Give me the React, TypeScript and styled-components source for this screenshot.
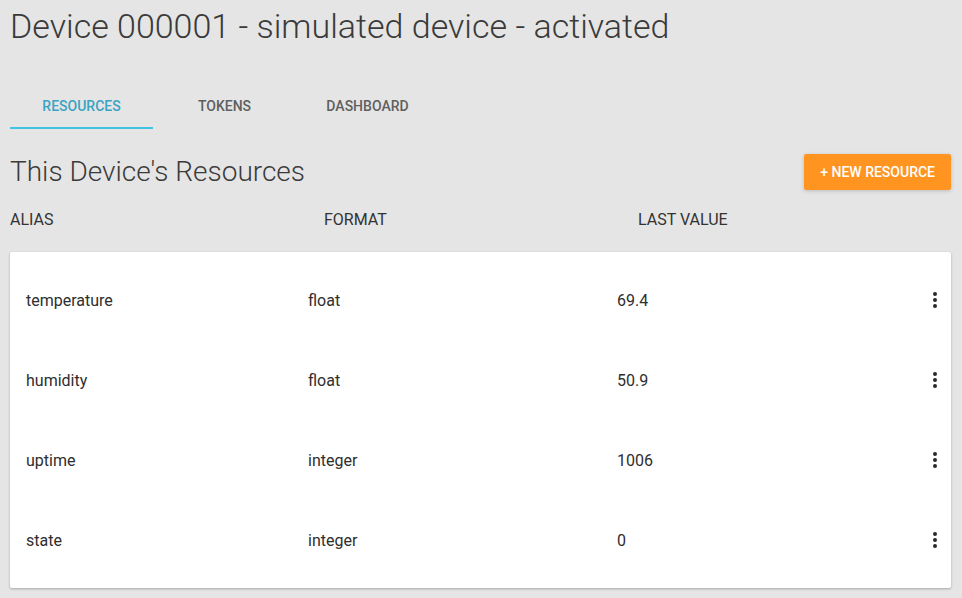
import React from "react";
import styled, { createGlobalStyle } from "styled-components";

const Global = createGlobalStyle`
  html, body { margin: 0; padding: 0; background: #e5e5e5; }
  body { font-family: Roboto, "Noto Sans", "Liberation Sans", sans-serif; color: #333; }
  * { box-sizing: border-box; }
`;

const Page = styled.div`
  padding: 6px 11px 10px 10px;
  display: flex;
  flex-direction: column;
`;

const Title = styled.h1`
  margin: 0;
  font-size: 34px;
  line-height: 40px;
  font-weight: 300;
  color: #3a3a3a;
`;

const TabBar = styled.div`
  display: flex;
  margin-top: 35px;
  height: 48px;
`;

const Tab = styled.div<{ $active?: boolean }>`
  width: 143px;
  display: flex;
  align-items: center;
  justify-content: center;
  font-size: 14px;
  font-weight: 500;
  color: ${(p) => (p.$active ? "#3aa3c2" : "#5f5f5f")};
  border-bottom: 2px solid ${(p) => (p.$active ? "#40c4e2" : "transparent")};
  padding-top: 4px;
`;

const SectionHeader = styled.div`
  display: flex;
  align-items: center;
  justify-content: space-between;
  margin-top: 25px;
  height: 36px;
`;

const SectionTitle = styled.h2`
  margin: 0;
  font-size: 28px;
  font-weight: 300;
  color: #3a3a3a;
  line-height: 36px;
`;

const PrimaryButton = styled.button`
  height: 36px;
  padding: 0 16px;
  border: none;
  border-radius: 2px;
  background: #ff9421;
  color: #fff;
  font-family: inherit;
  font-size: 14px;
  font-weight: 500;
  box-shadow: 0 1px 4px rgba(0, 0, 0, 0.18);
  cursor: pointer;
`;

const ColumnHeads = styled.div`
  display: grid;
  grid-template-columns: 314px 314px 1fr;
  margin-top: 17px;
  height: 24px;
  align-items: center;
  font-size: 16px;
  color: #333;
`;

const Card = styled.div`
  margin-top: 21px;
  background: #fff;
  border-radius: 2px;
  box-shadow: 0 1px 3px rgba(0, 0, 0, 0.18), 0 1px 2px rgba(0, 0, 0, 0.1);
  padding: 8px 0;
`;

const Row = styled.div`
  display: grid;
  grid-template-columns: 282px 309px 1fr 24px;
  align-items: center;
  height: 80px;
  padding: 0 4px 0 16px;
  font-size: 16px;
  color: #2e2e2e;
`;

const MenuButton = styled.div`
  display: flex;
  align-items: center;
  justify-content: center;
  width: 24px;
  height: 24px;
  color: #2a2a2a;
`;

const MoreVert = () => (
  <svg width="24" height="24" viewBox="0 0 24 24" fill="currentColor">
    <circle cx="12" cy="6" r="2" />
    <circle cx="12" cy="12" r="2" />
    <circle cx="12" cy="18" r="2" />
  </svg>
);

const resources = [
  { alias: "temperature", format: "float", value: "69.4" },
  { alias: "humidity", format: "float", value: "50.9" },
  { alias: "uptime", format: "integer", value: "1006" },
  { alias: "state", format: "integer", value: "0" },
];

export default function App() {
  return (
    <>
      <Global />
      <Page>
        <Title>Device 000001 - simulated device - activated</Title>
        <TabBar>
          <Tab $active>RESOURCES</Tab>
          <Tab>TOKENS</Tab>
          <Tab>DASHBOARD</Tab>
        </TabBar>
        <SectionHeader>
          <SectionTitle>This Device's Resources</SectionTitle>
          <PrimaryButton>+ NEW RESOURCE</PrimaryButton>
        </SectionHeader>
        <ColumnHeads>
          <span>ALIAS</span>
          <span>FORMAT</span>
          <span>LAST VALUE</span>
        </ColumnHeads>
        <Card>
          {resources.map((r) => (
            <Row key={r.alias}>
              <span>{r.alias}</span>
              <span>{r.format}</span>
              <span>{r.value}</span>
              <MenuButton>
                <MoreVert />
              </MenuButton>
            </Row>
          ))}
        </Card>
      </Page>
    </>
  );
}
